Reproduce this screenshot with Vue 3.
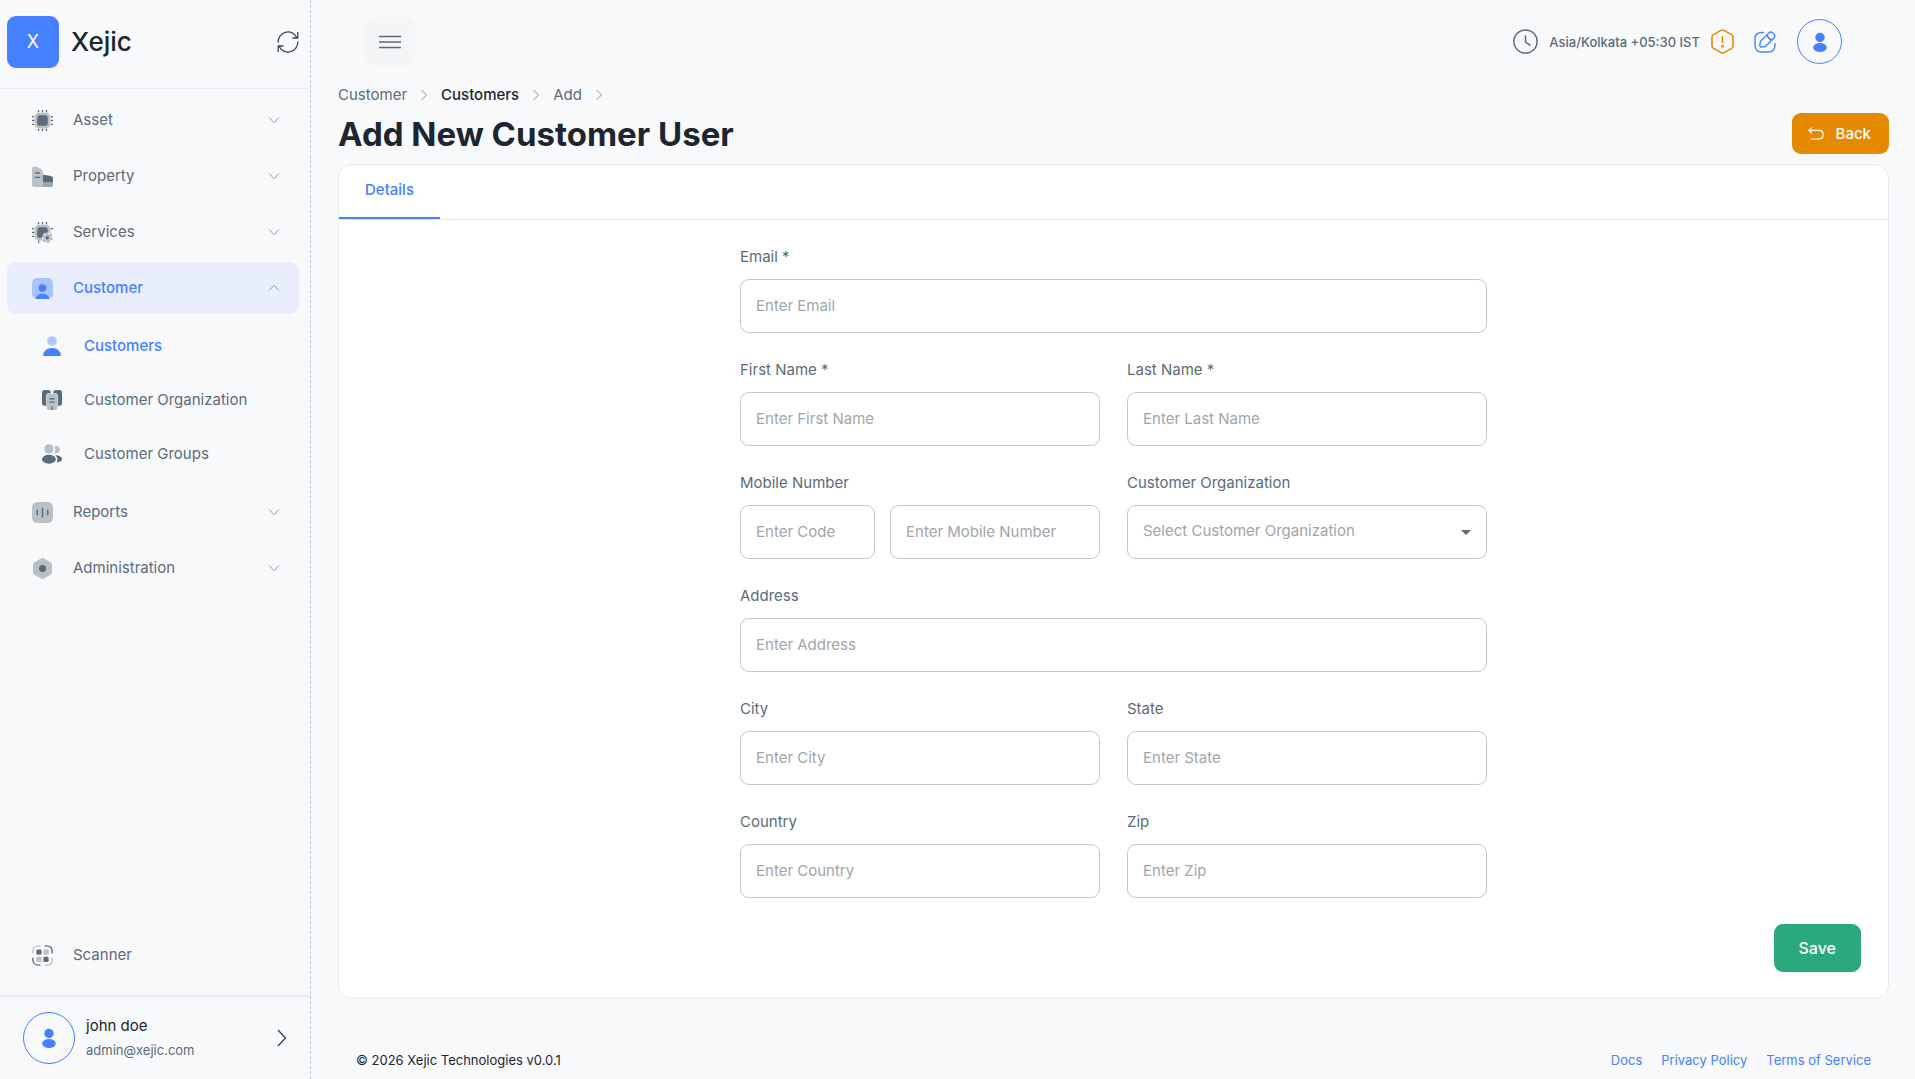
<script setup>
import { ref } from 'vue'

const menuTop = [
  { label: 'Asset', icon: 'asset' },
  { label: 'Property', icon: 'property' },
  { label: 'Services', icon: 'services' },
  { label: 'Customer', icon: 'customer', open: true }
]
const subMenu = [
  { label: 'Customers', icon: 'person', active: true },
  { label: 'Customer Organization', icon: 'org' },
  { label: 'Customer Groups', icon: 'groups' }
]
const menuBottom = [
  { label: 'Reports', icon: 'reports' },
  { label: 'Administration', icon: 'admin' }
]

const icons = {
  asset:
    '<rect x="3" y="3" width="18" height="18" rx="5" opacity=".4"/><rect x="6" y="6" width="12" height="12" rx="3"/><path d="M7.500 0v2.500M12 0v2.500M16.500 0v2.500M7.500 21.500V24M12 21.500V24M16.500 21.500V24M0 7.500h2.500M0 12h2.500M0 16.500h2.500M21.500 7.500H24M21.500 12H24M21.500 16.500H24" fill="none" stroke="currentColor" stroke-width="1.500"/>',
  property:
    '<path d="M0 4C0 1 2 0 4.500 .7L9 2.800C11.500 4 12.500 5.500 12.500 8v16H3c-2 0-3-1-3-3z" opacity=".4"/><path d="M12.500 10l8.500 1.500c2 .4 3 1.500 3 3.500v6c0 2-1 3-3 3h-8.500z" opacity=".6"/><path d="M12.500 10l8.500 1.500c2 .4 3 1.500 3 3.500v1.500c0 1.300-.8 2-1.800 2s-1.900-.7-1.900-1.500c0 .8-.9 1.500-1.900 1.500s-1.900-.7-1.900-1.500c0 .8-.9 1.500-2 1.500s-2-.7-2-2z"/><path d="M3.500 8H9M3.500 13H9" fill="none" stroke="currentColor" stroke-width="1.500"/>',
  services:
    '<path d="M8 3h8a5 5 0 0 1 5 5v4l-9 9H8a5 5 0 0 1-5-5V8a5 5 0 0 1 5-5z" opacity=".4"/><path d="M9 6h6a3 3 0 0 1 3 3v3l-4 1-2 5H9a3 3 0 0 1-3-3V9a3 3 0 0 1 3-3z"/><path d="M7.500 0v2.500M12 0v2.500M16.500 0v2.500M7.500 21V24M0 7.500h2.500M0 12h2.500M0 16.500h2.500M21.500 7.500H24" fill="none" stroke="currentColor" stroke-width="1.500"/><circle cx="17.500" cy="18" r="6" fill="#f8f9fb"/><circle cx="17.500" cy="18" r="4.800" opacity=".4"/><circle cx="17.500" cy="18" r="5.500" fill="none" stroke="currentColor" stroke-opacity=".4" stroke-width="1.800" stroke-dasharray="2.880"/><circle cx="17.500" cy="18" r="1.900"/>',
  customer:
    '<rect width="24" height="24" rx="6" opacity=".4"/><circle cx="12" cy="11.300" r="4.300"/><path d="M4.200 24c.3-3.500 3.500-6 7.800-6s7.500 2.500 7.800 6z"/>',
  person:
    '<circle cx="12" cy="6" r="5.800" opacity=".4"/><path d="M1.200 24c.3-5.500 4.500-9.500 10.800-9.500S22.500 18.500 22.800 24z"/>',
  org:
    '<path d="M3 0h4.500a3 3 0 0 1 3 3v16H3a3 3 0 0 1-3-3V3a3 3 0 0 1 3-3zM16.500 0H21a3 3 0 0 1 3 3v13a3 3 0 0 1-3 3h-7.500V3a3 3 0 0 1 3-3z"/><rect x="5" y="4" width="14" height="20" rx="3" fill="#f8f9fb"/><rect x="5.500" y="4.500" width="13" height="19.500" rx="3" opacity=".4"/><path d="M9 10.500h6M9 14.500h6M12 19.500V24" fill="none" stroke="currentColor" stroke-width="1.600"/>',
  groups:
    '<circle cx="8.300" cy="5.800" r="5.600" opacity=".4"/><path d="M14.500 11c2-2.500 2-6 .3-8.500C18 1.500 21.500 3.500 21.500 6.700c0 3-3.400 5.500-7 4.300z" opacity=".4"/><ellipse cx="8.300" cy="18.300" rx="8.300" ry="5.300"/><path d="M17.500 22c1.800-2.400 1.400-5.900-1.500-8.500 4 0 8 1.600 8 4.400 0 2.500-3 4-6.500 4.100z"/>',
  reports:
    '<rect width="24" height="24" rx="6" opacity=".4"/><path d="M6 9.500v5M12 7v10M18 9.500v5" fill="none" stroke="currentColor" stroke-width="1.700" stroke-linecap="round"/>',
  admin:
    '<path d="M10.200.6c1.100-.7 2.500-.7 3.600 0l7.200 4.200c1.100.7 1.800 1.700 1.800 3v8.400c0 1.300-.7 2.400-1.800 3l-7.200 4.200c-1.100.7-2.500.7-3.600 0L3 19.200c-1.100-.6-1.800-1.700-1.800-3V7.800c0-1.300.7-2.300 1.800-3z" opacity=".4"/><circle cx="12" cy="12" r="4"/>',
  scanner:
    '<g fill="none" stroke="currentColor" stroke-width="1.600" stroke-linecap="round"><path d="M1 9V7.500C1 3.500 3.500 1 7.500 1H9M23 15v1.500c0 4-2.500 6.500-6.500 6.500H15" opacity=".4"/><path d="M15 1h1.500C20.500 1 23 3.500 23 7.500V9M9 23H7.500C3.500 23 1 20.500 1 16.500V15"/></g><rect x="5" y="5" width="6" height="6" rx="1.500"/><rect x="13" y="13.500" width="6" height="6" rx="1.500"/><rect x="13" y="5" width="6" height="6" rx="1.500" opacity=".4"/><rect x="5" y="13.500" width="6" height="6" rx="1.500" opacity=".4"/>'
}

const form = ref({ email: '', first: '', last: '', code: '', mobile: '', org: '', address: '', city: '', state: '', country: '', zip: '' })
const year = 2026
</script>

<template>
  <div class="layout">
    <aside class="sidebar">
      <header class="brand">
        <span class="logo">X</span>
        <span class="brand-name">Xejic</span>
        <button class="icon-btn" type="button" aria-label="Refresh">
          <svg width="22" height="22" viewBox="0 0 22 22" fill="none" stroke="#3e4853" stroke-width="1.300">
            <path d="M1.200 11.500A9.800 9.800 0 0 1 19.800 6.500M20.800 1v6h-5.500M20.800 10.500A9.800 9.800 0 0 1 2.200 15.500M1.200 21v-6h5.500" />
          </svg>
        </button>
      </header>

      <nav class="menu" aria-label="Main">
        <button v-for="m in menuTop" :key="m.label" type="button" class="item" :class="{ open: m.open }">
          <svg class="nav-icon" viewBox="0 0 24 24" fill="currentColor" v-html="icons[m.icon]"></svg>
          <span>{{ m.label }}</span>
          <svg class="chev" viewBox="0 0 12 8"><path :d="m.open ? 'M1 6.500l5-5 5 5' : 'M1 1.500l5 5 5-5'" /></svg>
        </button>
        <div class="submenu">
          <a v-for="s in subMenu" :key="s.label" href="#" class="sub" :class="{ active: s.active }">
            <svg class="sub-icon" viewBox="0 0 24 24" fill="currentColor" v-html="icons[s.icon]"></svg>
            <span>{{ s.label }}</span>
          </a>
        </div>
        <button v-for="m in menuBottom" :key="m.label" type="button" class="item">
          <svg class="nav-icon" viewBox="0 0 24 24" fill="currentColor" v-html="icons[m.icon]"></svg>
          <span>{{ m.label }}</span>
          <svg class="chev" viewBox="0 0 12 8"><path d="M1 1.500l5 5 5-5" /></svg>
        </button>
      </nav>

      <div class="scanner">
        <a href="#" class="item">
          <svg class="nav-icon" viewBox="0 0 24 24" fill="currentColor" v-html="icons.scanner"></svg>
          <span>Scanner</span>
        </a>
      </div>

      <button type="button" class="profile">
        <span class="avatar large">
          <svg width="14" height="20" viewBox="0 0 14 20" fill="currentColor"><circle cx="7" cy="5.500" r="4.700" /><ellipse cx="7" cy="15.500" rx="6.800" ry="4.500" /></svg>
        </span>
        <span class="who">
          <span class="name">john doe</span>
          <span class="mail">admin@xejic.com</span>
        </span>
        <svg width="10" height="18" viewBox="0 0 10 18" fill="none" stroke="#3e4853" stroke-width="1.500"><path d="M1 1l7.500 8L1 17" /></svg>
      </button>
    </aside>

    <div class="page">
      <header class="topbar">
        <button type="button" class="burger" aria-label="Toggle menu">
          <svg width="22" height="14" viewBox="0 0 22 14" stroke="currentColor" stroke-width="1.500"><path d="M0 1.500h22M0 7h22M0 12.500h22" /></svg>
        </button>
        <div class="tools">
          <span class="zone">
            <svg width="25" height="25" viewBox="0 0 25 25" fill="none" stroke="currentColor" stroke-width="1.500"><circle cx="12.500" cy="12.500" r="11.600" /><path d="M12.500 7v5c0 .8.300 1.300 1 1.800l3.500 2.200" stroke-linecap="round" /></svg>
            <span>Asia/Kolkata +05:30 IST</span>
          </span>
          <button type="button" class="icon-btn warn" aria-label="Alerts">
            <svg width="23" height="25" viewBox="0 0 23 25" fill="none" stroke="currentColor" stroke-width="1.600"><path d="M10 1.400c.9-.5 2.100-.5 3 0l7.500 4.200c1 .5 1.500 1.400 1.500 2.500v8.800c0 1.100-.6 2-1.500 2.500L13 23.600c-.9.500-2.100.5-3 0l-7.500-4.200C1.600 18.900 1 18 1 16.900V8.100c0-1.100.6-2 1.500-2.500zM11.500 7v7" /><path d="M11.500 16v2.500" stroke-width="2.400" /></svg>
          </button>
          <button type="button" class="icon-btn edit" aria-label="Edit">
            <svg width="22" height="22" viewBox="0 0 22 22" fill="none" stroke="currentColor" stroke-width="1.400" stroke-linecap="round" stroke-linejoin="round"><path d="M9.500 1.500H8C3 1.500 1 3.500 1 8v6c0 5 2 7 7 7h6c5 0 7-2 7-7v-1.500" /><path d="M14.500 2.200 7 9.700c-.5.500-.7 1-.8 1.700l-.4 3c-.1 1 .6 1.700 1.600 1.600l3-.4c.7-.1 1.200-.3 1.700-.8l7.500-7.500c1.500-1.500 1.600-3.300 0-4.900s-3.500-1.700-5.100-.2zM13 4c.7 2.500 2.300 4.200 5 5" /></svg>
          </button>
          <button type="button" class="avatar" aria-label="Account">
            <svg width="14" height="20" viewBox="0 0 14 20" fill="currentColor"><circle cx="7" cy="5.500" r="4.700" /><ellipse cx="7" cy="15.500" rx="6.800" ry="4.500" /></svg>
          </button>
        </div>
      </header>

      <main class="content">
        <nav class="crumbs" aria-label="Breadcrumb">
          <a href="#">Customer</a>
          <svg viewBox="0 0 6 12"><path d="M.5 1l5 5-5 5" /></svg>
          <a href="#" class="strong">Customers</a>
          <svg viewBox="0 0 6 12"><path d="M.5 1l5 5-5 5" /></svg>
          <span>Add</span>
          <svg viewBox="0 0 6 12"><path d="M.5 1l5 5-5 5" /></svg>
        </nav>

        <div class="heading">
          <h1>Add New Customer User</h1>
          <button type="button" class="back">
            <svg width="16" height="13" viewBox="0 0 16 13" fill="none" stroke="currentColor" stroke-width="1.200" stroke-linecap="round" stroke-linejoin="round"><path d="M3.500 .8 1 3.300l2.500 2.500M1 3.300h10c2.800 0 4.200 1.700 4.200 4.300S13.800 12 11 12H3.500" /></svg>
            Back
          </button>
        </div>

        <form class="card" @submit.prevent>
          <div class="tabs" role="tablist">
            <button type="button" role="tab" aria-selected="true" class="tab">Details</button>
          </div>

          <div class="fields">
            <div class="field wide">
              <label for="email">Email <sup>*</sup></label>
              <input id="email" v-model="form.email" type="email" placeholder="Enter Email" />
            </div>
            <div class="field">
              <label for="first">First Name <sup>*</sup></label>
              <input id="first" v-model="form.first" type="text" placeholder="Enter First Name" />
            </div>
            <div class="field">
              <label for="last">Last Name <sup>*</sup></label>
              <input id="last" v-model="form.last" type="text" placeholder="Enter Last Name" />
            </div>
            <div class="field">
              <label for="mobile">Mobile Number</label>
              <div class="phone">
                <input id="code" v-model="form.code" type="text" placeholder="Enter Code" aria-label="Country code" />
                <input id="mobile" v-model="form.mobile" type="tel" placeholder="Enter Mobile Number" />
              </div>
            </div>
            <div class="field">
              <label for="org">Customer Organization</label>
              <div class="select">
                <select id="org" v-model="form.org">
                  <option value="" disabled>Select Customer Organization</option>
                </select>
                <svg width="10" height="5" viewBox="0 0 10 5" fill="currentColor"><path d="M0 0h10L5 5z" /></svg>
              </div>
            </div>
            <div class="field wide">
              <label for="address">Address</label>
              <input id="address" v-model="form.address" type="text" placeholder="Enter Address" />
            </div>
            <div class="field">
              <label for="city">City</label>
              <input id="city" v-model="form.city" type="text" placeholder="Enter City" />
            </div>
            <div class="field">
              <label for="state">State</label>
              <input id="state" v-model="form.state" type="text" placeholder="Enter State" />
            </div>
            <div class="field">
              <label for="country">Country</label>
              <input id="country" v-model="form.country" type="text" placeholder="Enter Country" />
            </div>
            <div class="field">
              <label for="zip">Zip</label>
              <input id="zip" v-model="form.zip" type="text" placeholder="Enter Zip" />
            </div>
          </div>

          <div class="actions">
            <button type="submit" class="save">Save</button>
          </div>
        </form>
      </main>

      <footer class="footer">
        <span>© {{ year }} Xejic Technologies v0.0.1</span>
        <nav class="links" aria-label="Legal">
          <a href="#">Docs</a>
          <a href="#">Privacy Policy</a>
          <a href="#">Terms of Service</a>
        </nav>
      </footer>
    </div>
  </div>
</template>

<style>
body {
  background: #f8f9fb;
}
</style>

<style scoped>
.layout,
.layout * {
  box-sizing: border-box;
}
.layout {
  display: flex;
  min-height: 100vh;
  font: 15px/20px "Inter", "Liberation Sans", sans-serif;
  color: #5b6b79;
}
button,
input,
select {
  font: inherit;
  color: inherit;
}
button {
  border: 0;
  background: none;
  padding: 0;
  cursor: pointer;
}
a {
  color: inherit;
  text-decoration: none;
}
svg {
  display: block;
  flex: none;
}

/* Sidebar */
.sidebar {
  position: sticky;
  top: 0;
  flex: none;
  display: flex;
  flex-direction: column;
  width: 311px;
  height: 100vh;
  border-right: 1px dashed #bec8d0;
}
.brand {
  display: flex;
  align-items: center;
  gap: 12px;
  height: 89px;
  padding: 0 11px 5px 7px;
  border-bottom: 1px solid #e7eaee;
}
.logo {
  display: grid;
  place-items: center;
  width: 52px;
  height: 52px;
  border-radius: 9px;
  background: #4680ff;
  color: #fff;
  font-size: 18px;
}
.brand-name {
  flex: 1;
  font-size: 26px;
  line-height: 32px;
  font-weight: 500;
  color: #1d2630;
}
.menu {
  display: flex;
  flex-direction: column;
  gap: 4px;
  flex: 1;
  padding: 5px 11px 0 7px;
}
.item {
  display: flex;
  align-items: center;
  gap: 20px;
  width: 100%;
  height: 52px;
  padding: 0 19px 0 25px;
  border-radius: 9px;
  text-align: left;
}
.item > span {
  flex: 1;
}
.item.open {
  background: #e8eefb;
  color: #4680ff;
  font-weight: 500;
}
.nav-icon {
  width: 21px;
  height: 21px;
}
.chev {
  width: 12px;
  height: 8px;
  fill: none;
  stroke: #8996a4;
  stroke-width: 1;
}
.submenu {
  padding: 1px 0;
}
.sub {
  display: flex;
  align-items: center;
  gap: 22px;
  height: 54px;
  padding-left: 35px;
}
.sub.active {
  color: #4680ff;
  font-weight: 500;
}
.sub-icon {
  width: 20px;
  height: 20px;
}
.scanner {
  padding: 0 11px 14px 7px;
  border-bottom: 2px solid #e7eaee;
}
.profile {
  display: flex;
  align-items: center;
  gap: 11px;
  height: 82px;
  padding: 0 23px;
  text-align: left;
}
.avatar {
  display: grid;
  place-items: center;
  width: 45px;
  height: 45px;
  border: 1px solid #4680ff;
  border-radius: 50%;
  color: #4680ff;
}
.avatar.large {
  width: 52px;
  height: 52px;
}
.who {
  flex: 1;
  display: flex;
  flex-direction: column;
  gap: 4px;
}
.name {
  color: #1d2630;
}
.mail {
  font-size: 13px;
}

/* Page */
.page {
  flex: 1;
  min-width: 0;
  display: flex;
  flex-direction: column;
  padding: 0 26px 0 27px;
}
.topbar {
  display: flex;
  align-items: center;
  justify-content: space-between;
  height: 83px;
  padding: 0 47px 0 27px;
}
.burger {
  display: grid;
  place-items: center;
  width: 50px;
  height: 49px;
  border-radius: 9px;
  background: #f3f5f7;
}
.tools {
  display: flex;
  align-items: center;
}
.zone {
  display: flex;
  align-items: center;
  gap: 11px;
  font-size: 13px;
  font-weight: 500;
}
.warn {
  margin-left: 11px;
  color: #e58a00;
}
.edit {
  margin: 0 21px 0 20px;
  color: #4680ff;
}
.crumbs {
  display: flex;
  align-items: center;
  gap: 14px;
  height: 24px;
}
.crumbs svg {
  width: 6px;
  height: 12px;
  fill: none;
  stroke: #8996a4;
  stroke-width: 1;
}
.strong {
  color: #1d2630;
  font-weight: 500;
}
.heading {
  display: flex;
  align-items: center;
  justify-content: space-between;
  padding: 6px 0 10px;
}
h1 {
  margin: 0;
  font-size: 33px;
  line-height: 40px;
  font-weight: 700;
  color: #1d2630;
}
.back {
  display: flex;
  align-items: center;
  gap: 12px;
  height: 41px;
  padding: 0 18px 0 16px;
  border-radius: 9px;
  background: #e58a00;
  color: #fff;
  font-weight: 500;
}
.card {
  border: 1px solid #e7eaee;
  border-radius: 14px;
  background: #fff;
}
.tabs {
  height: 55px;
  border-bottom: 1px solid #e7eaee;
}
.tab {
  height: 54px;
  padding: 0 26px 2px;
  border-bottom: 2px solid #4680ff;
  color: #4680ff;
  font-weight: 500;
}
.fields {
  display: grid;
  grid-template-columns: 1fr 1fr;
  gap: 27px;
  max-width: 747px;
  margin: 0 auto;
  padding: 27px 0 26px;
}
.field {
  display: flex;
  flex-direction: column;
  gap: 12px;
  min-width: 0;
}
.wide {
  grid-column: 1 / -1;
}
label {
  font-size: 15px;
}
sup {
  font-size: inherit;
  line-height: 1;
  vertical-align: baseline;
}
input,
select {
  width: 100%;
  height: 54px;
  padding: 0 15px 2px;
  border: 1px solid #bec8d0;
  border-radius: 9px;
  background: #fff;
  outline: none;
}
input::placeholder {
  color: #a0a5aa;
  opacity: 1;
}
.phone {
  display: grid;
  grid-template-columns: 9fr 14fr;
  gap: 15px;
}
.select {
  position: relative;
}
select {
  appearance: none;
  color: #a0a5aa;
}
.select svg {
  position: absolute;
  right: 16px;
  top: 50%;
  margin-top: -2px;
  pointer-events: none;
}
.actions {
  display: flex;
  justify-content: flex-end;
  padding: 0 27px 26px;
}
.save {
  height: 48px;
  padding: 0 25px;
  border-radius: 9px;
  background: #2ca87f;
  color: #fff;
  font-size: 16px;
  font-weight: 500;
}
.footer {
  display: flex;
  align-items: center;
  justify-content: space-between;
  margin-top: auto;
  padding: 0 18px 9px;
  font-size: 13px;
  color: #1d2630;
}
.links {
  display: flex;
  gap: 19px;
  color: #4680ff;
}
</style>
